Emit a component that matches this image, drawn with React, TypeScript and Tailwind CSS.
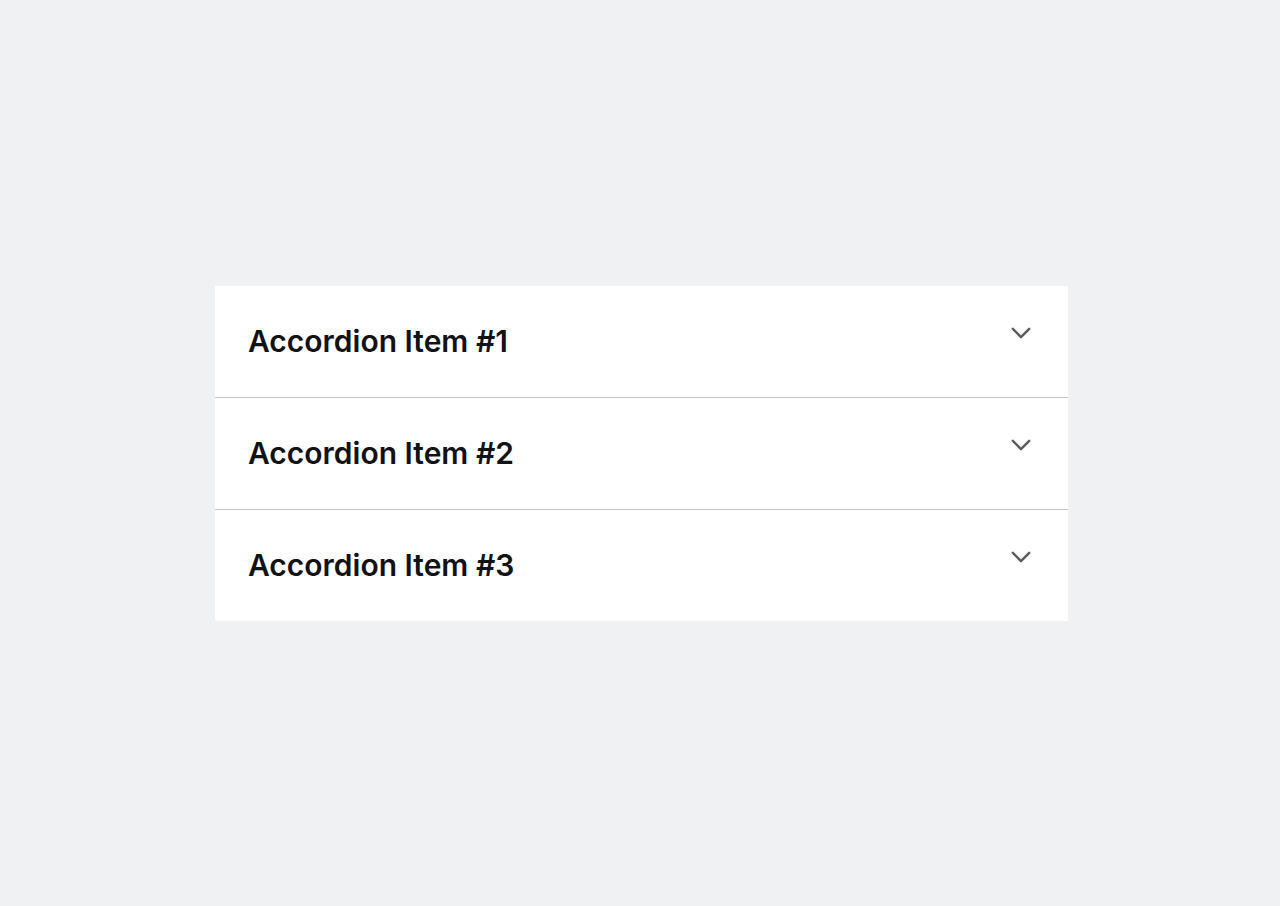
const items = ['Accordion Item #1', 'Accordion Item #2', 'Accordion Item #3']

function Chevron() {
  return (
    <svg width="20" height="13" viewBox="0 0 20 13" fill="none" className="mt-[41px] shrink-0">
      <polyline
        points="1.8,1.8 10,10.2 18.2,1.8"
        stroke="#5a5b5f"
        strokeWidth="2.4"
        strokeLinecap="round"
        strokeLinejoin="round"
      />
    </svg>
  )
}

export default function App() {
  return (
    <div className="flex min-h-[906px] items-center bg-[#f0f1f3] font-['Inter',sans-serif]">
      <div className="ml-[215px] w-[853px] bg-white">
        {items.map((label, i) => (
          <div
            key={label}
            className={`flex justify-between pl-[33px] pr-[37px] ${
              i > 0 ? 'h-[112px] border-t border-[#c4c5c7]' : 'h-[111px]'
            }`}
          >
            <span className="self-center text-[30px] font-semibold leading-[40px] text-[#111215]">
              {label}
            </span>
            <Chevron />
          </div>
        ))}
      </div>
    </div>
  )
}
